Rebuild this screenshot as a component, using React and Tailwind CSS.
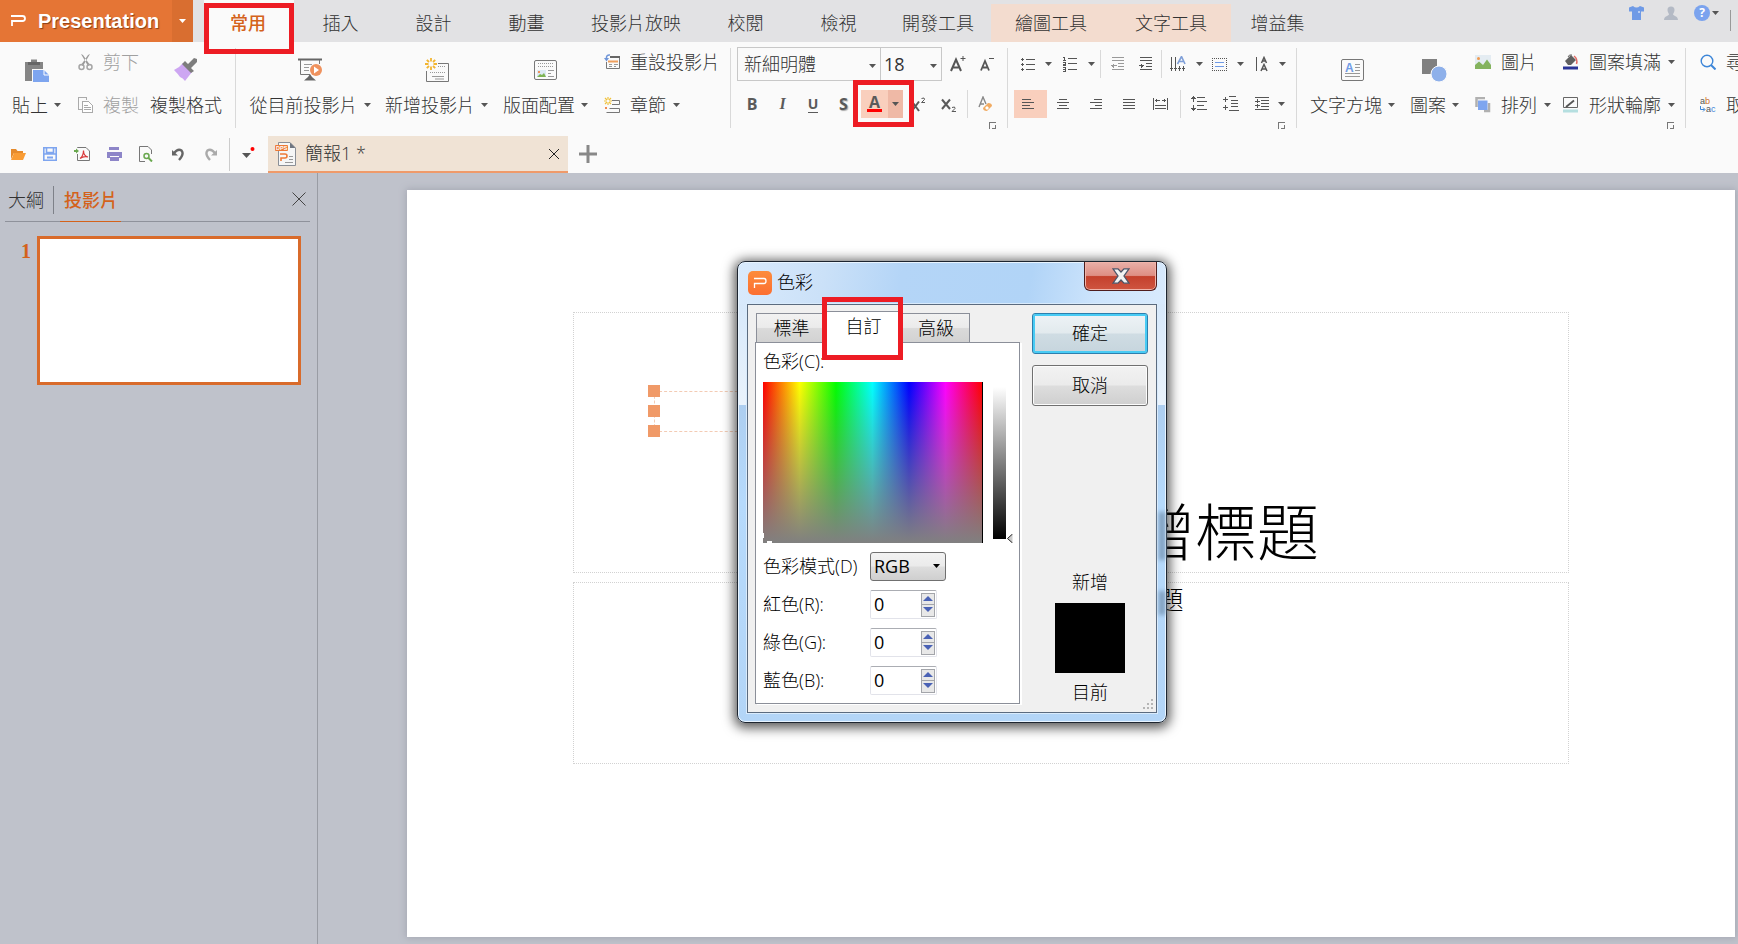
import React, { useState } from "react"
import clsx from "clsx"

const tabs = [
  { label: "插入", width: "w-[93px]" },
  { label: "設計", width: "w-[93px]" },
  { label: "動畫", width: "w-[93px]" },
  { label: "投影片放映", width: "w-[126px]" },
  { label: "校閱", width: "w-[93px]" },
  { label: "檢視", width: "w-[93px]" },
  { label: "開發工具", width: "w-[106px]" },
  { label: "繪圖工具", width: "w-[120px]", context: true },
  { label: "文字工具", width: "w-[120px]", context: true },
  { label: "增益集", width: "w-[93px]" },
]

/* Small building blocks */

function Icon({ w = 16, h = 16, children, className, crisp }) {
  return (
    <svg
      width={w}
      height={h}
      viewBox={`0 0 ${w} ${h}`}
      fill="none"
      stroke="none"
      shapeRendering={crisp ? "crispEdges" : "auto"}
      aria-hidden="true"
      className={clsx("block shrink-0", className)}>
      {children}
    </svg>
  )
}

function Caret({ className, color = "#555" }) {
  return (
    <Icon w={7} h={4} className={className}>
      <path d="M0 0H7L3.500 4z" fill={color} />
    </Icon>
  )
}

function Separator() {
  return <div className="mx-1.5 mt-1.5 h-20 w-px shrink-0 bg-[#d9d9d9]" />
}

function MiniSeparator({ className }) {
  return <div className={clsx("h-7 w-px shrink-0 bg-[#d9d9d9]", className)} />
}

function Highlight({ className }) {
  return (
    <div
      className={clsx(
        "pointer-events-none absolute z-10 border-5 border-[#ed1c24]",
        className
      )}
    />
  )
}

function BigButton({ width, icon, label, caret = true }) {
  return (
    <button
      className={clsx("flex shrink-0 flex-col items-center pt-[15px]", width)}>
      <span className="flex h-[26px] items-center">{icon}</span>
      <span className="mt-[11px] flex h-[22px] items-center gap-1.5 whitespace-nowrap">
        {label}
        {caret && <Caret />}
      </span>
    </button>
  )
}

function SmallButton({ icon, label, caret, disabled }) {
  return (
    <button
      disabled={disabled}
      className="flex h-[22px] items-center whitespace-nowrap disabled:text-[#a0a0a0]">
      <span className="mr-2.5 flex w-4 justify-center">{icon}</span>
      {label}
      {caret && <Caret className="ml-[7px]" />}
    </button>
  )
}

function Stack({ width, children }) {
  return (
    <div
      className={clsx("flex shrink-0 flex-col gap-[21px] pt-[9px] pl-2", width)}>
      {children}
    </div>
  )
}

function Tool({ width, label, children, active }) {
  return (
    <button
      aria-label={label}
      className={clsx(
        "flex h-7 shrink-0 items-center justify-center",
        width,
        active && "bg-[#f9cfbd]"
      )}>
      {children}
    </button>
  )
}

function Launcher({ className }) {
  return (
    <button
      aria-label="更多選項"
      className={clsx("mr-[5px] self-end", className)}>
      <Icon w={7} h={7} crisp>
        <path d="M0.500 7V0.500H7M3 6.500H6.500V3" stroke="#777" />
      </Icon>
    </button>
  )
}

/* Draws horizontal rules, each one given as [x, y, length] */
function Rules({ rows, color = "#555", weight = 1 }) {
  return rows.map(([x, y, len], i) => (
    <rect key={i} x={x} y={y} width={len} height={weight} fill={color} />
  ))
}

/* Title bar */

function TitleBar() {
  return (
    <header className="flex h-[42px] overflow-visible bg-[#e2e2e4]">
      <button className="flex w-[172px] shrink-0 items-center bg-[#e57535] pl-[11px] text-white">
        <Icon w={15} h={14}>
          <path
            d="M0 2H11.5Q14 2 14 4.500T11.500 7H1V12"
            stroke="#fff"
            strokeWidth="1.800"
          />
        </Icon>
        <span className="ml-3 font-['Liberation_Sans',sans-serif] text-xl leading-6 font-bold [text-shadow:1px_1px_1px_#8a4018]">
          Presentation
        </span>
      </button>
      <button
        aria-label="選單"
        className="flex w-[21px] shrink-0 items-center justify-center bg-[#d96e30]">
        <Caret color="#fff" />
      </button>
      <nav className="flex">
        <button className="relative ml-[11px] w-[90px] bg-[#fafafa] pt-1 pr-0.5 font-medium text-[#d4621b]">
          常用
          <Highlight className="top-[3px] left-0 h-[51px] w-[90px]" />
        </button>
        {tabs.map((tab) => (
          <button
            key={tab.label}
            className={clsx(
              "mt-1 h-[38px] shrink-0 whitespace-nowrap",
              tab.width,
              tab.context && "bg-[#f3dccf]"
            )}>
            {tab.label}
          </button>
        ))}
      </nav>
      <div className="ml-auto flex items-start pt-[5px] pr-[7px]">
        <button aria-label="佈景主題" className="mr-5">
          <Icon w={15} h={16}>
            <path
              d="M4 1L0 2.500V6.500H3V15H12V6.500H15V2.500L11 1Q7.500 4 4 1Z"
              fill="#6f9ae6"
            />
            <path d="M9 7h2" stroke="#fff" />
          </Icon>
        </button>
        <button aria-label="帳戶" className="mr-4">
          <Icon w={14} h={16}>
            <path
              d="M7 1.500c2.500 0 3.500 1.500 3.500 3.500S9 8.500 9 9.500c0 1 5 1.500 5 5.500H0c0-4 5-4.500 5-5.500 0-1-1.500-2.500-1.500-4.500S4.500 1.500 7 1.500z"
              fill="#b4bac5"
            />
          </Icon>
        </button>
        <button aria-label="說明" className="mr-[11px] flex items-center gap-0.5">
          <span className="flex h-4 w-4 items-center justify-center rounded-full bg-[#7ba3ee] text-xs leading-4 font-bold text-white">
            ?
          </span>
          <Caret />
        </button>
        <div className="mt-[5px] h-[21px] w-px bg-[#999]" />
      </div>
    </header>
  )
}

/* Ribbon icons */

const pasteIcon = (
  <Icon w={25} h={24}>
    <path d="M1 4H7V1.500H13V4H19V11H8V23H1Z" fill="#858585" />
    <path d="M4 4h12v3H4z" fill="#666" />
    <path d="M9 12H20L25 17V24H9Z" fill="#7ea5ef" />
    <path d="M20 12V17H25" stroke="#fff" />
  </Icon>
)

const cutIcon = (
  <Icon w={15} h={17}>
    <path d="M3 0L5 1 12 11 10 12ZM12 0L10 1 3 11 5 12Z" fill="#9b9b9b" />
    <circle cx="3.5" cy="13" r="2.500" stroke="#a5a5a5" strokeWidth="1.500" />
    <circle cx="11.500" cy="13" r="2.500" stroke="#a5a5a5" strokeWidth="1.500" />
  </Icon>
)

const copyIcon = (
  <Icon w={15} h={16} crisp>
    <path d="M4 12.500H0.500V0.500H8.500V3" stroke="#aaa" />
    <path d="M4.500 4.500H10.500L14.500 8.500V15.500H4.500Z" stroke="#aaa" fill="#fff" />
    <path d="M6 8.500h4M6 10.500h7M6 12.500h7" stroke="#aaa" />
  </Icon>
)

const brushIcon = (
  <Icon w={24} h={24}>
    <path d="M9 5L18 14 11 23Q9 20 6 19 4 16 0 12Q5 10 9 5Z" fill="#cda6f2" />
    <path d="M11 3L14 6 20 0 23 1 23 4 17 10 20 13 17 15 8 6Z" fill="#7d7d7d" />
  </Icon>
)

const playIcon = (
  <Icon w={24} h={24}>
    <path d="M0 1.500H24" stroke="#666" strokeWidth="2" />
    <path d="M2.500 2V16.500H12M21.500 2V6" stroke="#777" />
    <path d="M6 6.500h8M6 9.500h5M6 12.500h5" stroke="#999" />
    <path d="M12 16L14 19 18 22.500H6L10 19Z" fill="#666" />
    <circle cx="18" cy="12" r="6" fill="#ef925e" />
    <path d="M16 8.500L21 12 16 15.500Z" fill="#fff" />
  </Icon>
)

const sparkPath =
  "M6 0V3.500M6 8.500V12M0 6H3.500M8.500 6H12M1.800 1.800L4 4M8 8L10.200 10.200M10.200 1.800L8 4M4 8L1.800 10.200"

const newSlideIcon = (
  <Icon w={24} h={24}>
    <path d="M13 5.500H23.500V23.500H1.500V13" stroke="#777" />
    <path d="M13 8.500h8M5 14.500h16" stroke="#999" strokeDasharray="1 1" />
    <path d="M7 18.500h12M10 21h9" stroke="#999" />
    <path d={sparkPath} stroke="#f2b531" strokeWidth="1.800" />
  </Icon>
)

const layoutIcon = (
  <Icon w={24} h={22}>
    <rect x="0.500" y="1.500" width="22" height="19" rx="1.500" stroke="#777" />
    <path d="M4 4.500h16M4 7.500h16" stroke="#999" strokeDasharray="1 1" />
    <rect x="3" y="11" width="9" height="7" fill="#dce9f3" />
    <path d="M3 18L6 15 8 16 10 14 12 18Z" fill="#7db354" />
    <path d="M4 12h2v2H4z" fill="#ef925e" />
    <path d="M14 11.500h6M14 14.500h3M14 17.500h6" stroke="#999" />
  </Icon>
)

const resetIcon = (
  <Icon w={16} h={16}>
    <path d="M6 2.500H15.500V14.500H2.500V8" stroke="#777" />
    <path d="M6 3H16" stroke="#666" strokeWidth="2" />
    <path d="M4 7.500h10" stroke="#ef9f5c" strokeWidth="2" />
    <path d="M5 10.500h3M5 12.500h3M10 10.500h4M10 12.500h2" stroke="#999" />
    <path d="M6 1Q2 0.500 2.500 5" stroke="#6f95d8" strokeWidth="1.500" />
    <path d="M0 4H5L2.500 7.500Z" fill="#6f95d8" />
  </Icon>
)

const sectionIcon = (
  <Icon w={16} h={17}>
    <path
      d="M4 0V2.500M4 5.500V8M0 4H2.500M5.500 4H8M1 1L3 3M5 5L7 7M7 1L5 3M3 5L1 7"
      stroke="#f0c23c"
      strokeWidth="1.200"
    />
    <path d="M8 3.500H15.500V7.500H8" stroke="#777" />
    <path d="M1 10h2v2H1z" fill="#ef8a50" />
    <path d="M5.500 11.500H15.500V15.500H2.500" stroke="#777" />
  </Icon>
)

const textBoxIcon = (
  <Icon w={24} h={24}>
    <rect x="0.500" y="1.500" width="22" height="21" rx="1.500" stroke="#777" />
    <text
      x="4"
      y="13.500"
      fontSize="12"
      fontWeight="700"
      fill="#6f9ae6"
      fontFamily="Liberation Sans, sans-serif">
      A
    </text>
    <path d="M14 6.500h5M14 9.500h5M14 12.500h5M4 15.500h15M4 18.500h15" stroke="#999" />
  </Icon>
)

const shapeIcon = (
  <Icon w={25} h={24}>
    <path d="M0 1H15V16H0Z" fill="#808080" />
    <circle cx="17" cy="16" r="8" fill="#8eb0ea" stroke="#fafafa" />
  </Icon>
)

const pictureIcon = (
  <Icon w={16} h={16}>
    <path d="M0 1H16V15H0Z" fill="#e4ecf2" />
    <circle cx="3.500" cy="4.500" r="1.500" fill="#f09a50" />
    <path d="M0 15V11L4 7.500 8 11 12 5.500 16 11V15Z" fill="#84b35e" />
  </Icon>
)

const arrangeIcon = (
  <Icon w={16} h={16}>
    <path d="M1.500 10V1H10M9 14H14V6" stroke="#b0b0b0" strokeWidth="2.500" />
    <path d="M3 3.500h9.500v9.500H3z" fill="#7ea5ef" />
  </Icon>
)

const fillIcon = (
  <Icon w={16} h={16}>
    <path d="M2 7L8 1 13 6 8 11H5Z" fill="#606060" />
    <path d="M5 3Q6 0 9 1" stroke="#666" />
    <path d="M11 2Q15 5 13.500 10" stroke="#e26a63" strokeWidth="1.500" />
    <path d="M0 12.500h15v3H0z" fill="#2b3597" />
  </Icon>
)

const outlineIcon = (
  <Icon w={16} h={16}>
    <path d="M0.500 0.500H14.500V10.500H0.500Z" stroke="#666" />
    <path d="M3 10L11 3.500" stroke="#555" strokeWidth="1.800" />
    <path d="M0 12.500h15v3H0z" fill="#b5dfe0" />
  </Icon>
)

const findIcon = (
  <Icon w={16} h={16}>
    <circle cx="7" cy="7" r="5.800" stroke="#3d86d8" strokeWidth="1.400" />
    <path d="M11 11L15.500 15.500" stroke="#3d86d8" strokeWidth="2" />
  </Icon>
)

const replaceIcon = (
  <Icon w={16} h={16}>
    <g fontSize="9" fontWeight="400" fontFamily="Liberation Sans, sans-serif">
      <text x="0" y="7" fill="#555">
        a
      </text>
      <text x="5" y="7" fill="#d0702c">
        b
      </text>
      <text x="6" y="15" fill="#555">
        a
      </text>
      <text x="11" y="15" fill="#3d86d8">
        c
      </text>
    </g>
    <path d="M0.500 9V12.500H4.500M3 10.500L5 12.500 3 14.500" stroke="#3d86d8" />
  </Icon>
)

function FontGroup({ onPickColor }) {
  const [font, setFont] = useState("新細明體")
  const [size, setSize] = useState("18")
  return (
    <div className="flex w-[264px] shrink-0 flex-col pt-[5px]">
      <div className="flex h-[34px] items-center">
        <div className="relative h-full w-36">
          <select
            aria-label="字型"
            value={font}
            onChange={(e) => setFont(e.target.value)}
            className="h-full w-full appearance-none border border-[#c8c8c8] pl-1.5 outline-0">
            <option>新細明體</option>
            <option>標楷體</option>
          </select>
          <Caret className="pointer-events-none absolute top-[17px] right-[5px]" />
        </div>
        <div className="relative -ml-px h-full w-[62px]">
          <select
            aria-label="字型大小"
            value={size}
            onChange={(e) => setSize(e.target.value)}
            className="h-full w-full appearance-none border border-[#c8c8c8] pl-[3px] font-normal outline-0">
            <option>18</option>
            <option>24</option>
          </select>
          <Caret className="pointer-events-none absolute top-[17px] right-[5px]" />
        </div>
        <Tool width="w-[31px]" label="放大字型">
          <Icon w={16} h={18}>
            <path d="M1 16L6 4.500 11 16M3 12.500H9" stroke="#555" strokeWidth="2" />
            <path d="M10.500 3.500H15.500M13 1V6" stroke="#555" />
          </Icon>
        </Tool>
        <Tool width="w-[28px]" label="縮小字型">
          <Icon w={15} h={18}>
            <path d="M1 15.500L5 6 9 15.500M3 12.500H7" stroke="#555" strokeWidth="1.800" />
            <path d="M9 3.500H14" stroke="#555" />
          </Icon>
        </Tool>
      </div>
      <div className="mt-[9px] flex font-['Open_Sans',sans-serif] text-base leading-5 font-bold text-[#5a5a5a]">
        <Tool width="w-[30px]" label="粗體">
          B
        </Tool>
        <Tool width="w-[31px]" label="斜體">
          <span className="font-['Liberation_Serif',serif] italic">I</span>
        </Tool>
        <Tool width="w-[30px]" label="底線">
          <span className="border-b border-[#5a5a5a] text-sm leading-4">U</span>
        </Tool>
        <Tool width="w-[31px]" label="陰影">
          <span className="[text-shadow:1px_1px_1px_#aaa]">S</span>
        </Tool>
        <div className="relative ml-0.5 flex">
          <button
            aria-label="字型色彩"
            className="flex h-7 w-[27px] flex-col items-center bg-[#f9cfbd] pt-1">
            <span className="text-base leading-4">A</span>
            <span className="-mt-px h-[3px] w-[15px] bg-[#f00]" />
          </button>
          <button
            aria-label="字型色彩選項"
            onClick={onPickColor}
            className="flex h-7 w-[15px] items-center justify-center bg-[#efb9a6]">
            <Caret />
          </button>
          <Highlight className="-top-2.5 -left-2 h-[47px] w-[61px]" />
        </div>
        <Tool width="w-[30px]" label="上標">
          <Icon w={15} h={15}>
            <path d="M1 4.500L8 14M8 4.500L1 14" stroke="#5a5a5a" strokeWidth="2" />
            <path d="M10.500 1.500Q14 0 13.500 2.500L10.500 5.500H14" stroke="#5a5a5a" />
          </Icon>
        </Tool>
        <Tool width="w-[30px]" label="下標">
          <Icon w={15} h={15}>
            <path d="M1 2.500L9 12M9 2.500L1 12" stroke="#5a5a5a" strokeWidth="2" />
            <path d="M11 10.500Q14.500 9 14 11.500L11 14.500H15" stroke="#5a5a5a" />
          </Icon>
        </Tool>
        <MiniSeparator className="ml-1" />
        <Tool width="w-[35px]" label="清除格式">
          <Icon w={15} h={16}>
            <path d="M1 11L5 1 8 8M2.500 8H6" stroke="#888" strokeWidth="1.400" />
            <path d="M5 12L10 7Q14 7 14 10L9 15Q5 15 5 12Z" fill="#f1ab62" />
            <path d="M7 12L9 10 11 12 9 14Z" fill="#fff" />
          </Icon>
        </Tool>
      </div>
      <Launcher className="mt-1" />
    </div>
  )
}

function ParagraphGroup() {
  return (
    <div className="flex w-[276px] shrink-0 flex-col pt-2">
      <div className="flex items-center">
        <Tool width="w-[28px]" label="項目符號">
          <Icon w={14} h={14} crisp>
            <Rules rows={[[5, 2, 9], [5, 7, 9], [5, 12, 9], [0, 2, 3], [0, 7, 3], [0, 12, 3]]} />
            <path d="M1.500 1v3M1.500 6v3M1.500 11v3" stroke="#555" />
          </Icon>
        </Tool>
        <Tool width="w-[13px]" label="項目符號選項">
          <Caret />
        </Tool>
        <Tool width="w-[30px]" label="編號">
          <Icon w={14} h={16} crisp>
            <Rules rows={[[5, 2, 9], [5, 7, 9], [5, 13, 9]]} />
            <path
              d="M0 1.500h1.500v3M0 4.500h3M0 6.500h2.500v1.500h-2v1.500h2.500M0 11.500h2.500v4H0M0 13.500h2.500"
              stroke="#555"
            />
          </Icon>
        </Tool>
        <Tool width="w-[12px]" label="編號選項">
          <Caret />
        </Tool>
        <MiniSeparator className="ml-[3px]" />
        <Tool width="w-[32px]" label="減少縮排">
          <Icon w={13} h={14} crisp>
            <Rules color="#999" rows={[[1, 0, 12], [1, 3, 12], [7, 6, 6], [7, 9, 6], [1, 12, 12]]} />
            <path d="M0 8.500H6M2.500 6.500V10.500M1.500 7.500V9.500" stroke="#999" />
          </Icon>
        </Tool>
        <Tool width="w-[24px]" label="增加縮排">
          <Icon w={13} h={14} crisp>
            <Rules rows={[[1, 0, 12], [1, 3, 12], [7, 6, 6], [7, 9, 6], [1, 12, 12]]} />
            <path d="M0 8.500H5M2.500 6.500V10.500M3.500 7.500V9.500" stroke="#555" />
          </Icon>
        </Tool>
        <MiniSeparator className="ml-1" />
        <Tool width="w-[32px]" label="文字方向">
          <Icon w={16} h={16}>
            <path d="M1.500 1V15M5.500 1V15M9.500 10V15M13.500 10V15" stroke="#555" />
            <path d="M0 12.500h15" stroke="#555" strokeDasharray="3 1" />
            <path d="M7.500 8L11.500 0.500 15 8M9 5.500H14" stroke="#7f9fd8" strokeWidth="1.600" />
          </Icon>
        </Tool>
        <Tool width="w-[10px]" label="文字方向選項">
          <Caret />
        </Tool>
        <Tool width="w-[30px]" label="對齊文字">
          <Icon w={15} h={13} crisp>
            <path
              d="M0 0.500H15M0 12.500H15M0.500 0V13M14.500 0V13"
              stroke="#555"
              strokeDasharray="1 1"
            />
            <Rules color="#6f9ae6" rows={[[3, 4, 9], [3, 8, 9]]} />
          </Icon>
        </Tool>
        <Tool width="w-[13px]" label="對齊文字選項">
          <Caret />
        </Tool>
        <Tool width="w-[30px]" label="字元間距">
          <Icon w={13} h={16}>
            <path d="M0.500 1V15" stroke="#555" />
            <path d="M5.500 7L8 1.500 10.500 7M6.500 5H9.500M5 15L8 8.500 11 15M6 13H10" stroke="#555" strokeWidth="1.500" />
          </Icon>
        </Tool>
        <Tool width="w-[11px]" label="字元間距選項">
          <Caret />
        </Tool>
      </div>
      <div className="mt-3 flex items-center">
        <Tool width="w-[33px]" label="靠左對齊" active>
          <Icon w={14} h={10} crisp className="-ml-1">
            <Rules rows={[[0, 0, 9], [0, 3, 12], [0, 6, 8], [0, 9, 12]]} />
          </Icon>
        </Tool>
        <Tool width="w-[32px]" label="置中">
          <Icon w={12} h={10} crisp>
            <Rules rows={[[2, 0, 8], [0, 3, 12], [2, 6, 8], [0, 9, 12]]} />
          </Icon>
        </Tool>
        <Tool width="w-[34px]" label="靠右對齊">
          <Icon w={12} h={10} crisp>
            <Rules rows={[[4, 0, 8], [0, 3, 12], [5, 6, 7], [0, 9, 12]]} />
          </Icon>
        </Tool>
        <Tool width="w-[31px]" label="左右對齊">
          <Icon w={12} h={10} crisp>
            <Rules rows={[[0, 0, 12], [0, 3, 12], [0, 6, 12], [0, 9, 12]]} />
          </Icon>
        </Tool>
        <Tool width="w-[33px]" label="分散對齊">
          <Icon w={15} h={12} crisp>
            <path d="M0.500 0V12M14.500 0V12M2 2.500H6.500M8.500 2.500H13M3.500 1V4M11.500 1V4" stroke="#555" />
            <Rules rows={[[2, 7, 11], [2, 10, 11]]} />
          </Icon>
        </Tool>
        <MiniSeparator className="ml-[3px]" />
        <Tool width="w-[36px]" label="行距">
          <Icon w={16} h={16} crisp>
            <Rules rows={[[6, 1, 8], [6, 5, 10], [6, 9, 7], [6, 13, 10]]} />
            <path d="M2.500 0V6M0 2.500H5M1 1.500H4M2.500 9V15M0 12.500H5M1 13.500H4" stroke="#555" />
          </Icon>
        </Tool>
        <Tool width="w-[28px]" label="段落間距">
          <Icon w={16} h={16} crisp>
            <Rules rows={[[6, 0, 7], [8, 4, 7], [8, 7, 7], [8, 10, 7], [6, 14, 10]]} />
            <path d="M2.500 1V6M0 3.500H5M2.500 9V14M0 11.500H5" stroke="#555" />
          </Icon>
        </Tool>
        <Tool width="w-[33px]" label="行高">
          <Icon w={14} h={14} crisp>
            <Rules rows={[[0, 0, 14], [6, 3, 8], [6, 6, 8], [6, 9, 8], [0, 12, 14]]} />
            <path d="M2.500 2V6M0 4.500H5M2.500 7V11M0 8.500H5" stroke="#555" />
          </Icon>
        </Tool>
        <Caret />
      </div>
      <Launcher className="mt-1" />
    </div>
  )
}

function Ribbon({ onPickColor }) {
  return (
    <div className="flex h-[94px] bg-[#fafafa]">
      <BigButton width="w-[69px] pl-1" icon={pasteIcon} label="貼上" />
      <Stack width="w-[76px]">
        <SmallButton icon={cutIcon} label="剪下" disabled />
        <SmallButton icon={copyIcon} label="複製" disabled />
      </Stack>
      <BigButton width="w-[82px]" icon={brushIcon} label="複製格式" caret={false} />
      <div className="w-0.5 shrink-0" />
      <Separator />
      <BigButton width="w-[136px]" icon={playIcon} label="從目前投影片" />
      <BigButton width="w-[117px]" icon={newSlideIcon} label="新增投影片" />
      <BigButton width="w-[101px]" icon={layoutIcon} label="版面配置" />
      <Stack width="w-[128px]">
        <SmallButton icon={resetIcon} label="重設投影片" />
        <SmallButton icon={sectionIcon} label="章節" caret />
      </Stack>
      <Separator />
      <FontGroup onPickColor={onPickColor} />
      <Separator />
      <ParagraphGroup />
      <Separator />
      <BigButton width="w-[99px]" icon={textBoxIcon} label="文字方塊" />
      <BigButton width="w-[65px]" icon={shapeIcon} label="圖案" />
      <Stack width="w-[88px]">
        <SmallButton icon={pictureIcon} label="圖片" />
        <SmallButton icon={arrangeIcon} label="排列" caret />
      </Stack>
      <div className="flex w-[124px] shrink-0 flex-col">
        <Stack>
          <SmallButton icon={fillIcon} label="圖案填滿" caret />
          <SmallButton icon={outlineIcon} label="形狀輪廓" caret />
        </Stack>
        <Launcher className="mt-1.5" />
      </div>
      <Separator />
      <div className="min-w-0 flex-1 overflow-hidden">
        <Stack>
          <SmallButton icon={findIcon} label="尋找" />
          <SmallButton icon={replaceIcon} label="取代" />
        </Stack>
      </div>
    </div>
  )
}

/* Quick access + document tabs */

const quickActions = [
  {
    label: "開啟",
    icon: (
      <Icon>
        <path d="M1 13V3H6L7.500 5H13V7H4Z" fill="#e58a2b" />
        <path d="M4 7H16L13 14H1Z" fill="#f99c34" />
      </Icon>
    ),
  },
  {
    label: "儲存",
    icon: (
      <Icon w={14} h={14}>
        <path d="M0.800 0.800H13.200V13.200H0.800Z" stroke="#7ea5ef" strokeWidth="1.600" />
        <path d="M0 7H14M3.500 1V5.500H10.500V1" stroke="#7ea5ef" strokeWidth="1.600" />
        <path d="M4 10.500h6" stroke="#7ea5ef" strokeWidth="2" />
      </Icon>
    ),
  },
  {
    label: "匯出 PDF",
    icon: (
      <Icon>
        <path d="M3.500 2V1.500H12L15.500 5V14.500H3.500V8" stroke="#777" />
        <path d="M0 4h2V2.500L5 5 2 7.500V6H0z" fill="#6aa84f" />
        <path d="M6 12.500C8 11 9.500 8 9.500 4.500 9.500 8 11.500 10.500 14 11 11 10 8 11 6 12.500Z" stroke="#d8383a" strokeWidth="1.200" />
      </Icon>
    ),
  },
  {
    label: "列印",
    icon: (
      <Icon>
        <path d="M3 1H13V4H3Z" fill="#8d85c8" />
        <path d="M1 6H16V12H13V10H4V12H1Z" fill="#8d85c8" />
        <path d="M4 11H13V15H4Z" fill="#8d85c8" />
      </Icon>
    ),
  },
  {
    label: "預覽列印",
    icon: (
      <Icon>
        <path d="M7 15.500H1.500V0.500H10L13.500 4V8" stroke="#777" />
        <circle cx="8.500" cy="10" r="2.500" stroke="#6aa84f" strokeWidth="1.500" />
        <path d="M10.500 12L14 15.500" stroke="#6aa84f" strokeWidth="2" />
      </Icon>
    ),
  },
  {
    label: "復原",
    icon: (
      <Icon w={13} h={14}>
        <path d="M2 6Q6 1 9.500 3.500 12.500 7 7 13" stroke="#666" strokeWidth="2.400" />
        <path d="M0 3V8.500H6Z" fill="#666" />
      </Icon>
    ),
  },
  {
    label: "取消復原",
    icon: (
      <Icon w={13} h={14}>
        <path d="M11 6Q7 1 3.500 3.500 0.500 7 6 13" stroke="#aaa" strokeWidth="2.400" />
        <path d="M13 3V8.500H7Z" fill="#aaa" />
      </Icon>
    ),
  },
]

function DocumentBar() {
  return (
    <div className="flex h-[37px] bg-[#fafafa]">
      <div className="flex items-center pb-0.5 pl-0.5">
        {quickActions.map((action) => (
          <button
            key={action.label}
            aria-label={action.label}
            className="flex h-8 w-8 items-center justify-center">
            {action.icon}
          </button>
        ))}
      </div>
      <div className="mt-0.5 ml-[3px] h-[33px] w-px bg-[#ccc]" />
      <button
        aria-label="自訂快速存取"
        className="flex w-[38px] items-center justify-center pb-1.5">
        <Icon w={14} h={12}>
          <path d="M0 7H9L4.500 12Z" fill="#555" />
          <circle cx="10.500" cy="3" r="2" fill="#f00" />
        </Icon>
      </button>
      <div className="flex w-[300px] items-center border-b-2 border-[#ef9a6a] bg-[#f0e3d5] pr-[9px] pl-[7px]">
        <Icon w={22} h={24}>
          <path d="M3.500 0.500H15L20.500 6V23.500H3.500Z" fill="#f6f6f6" stroke="#8b8f96" />
          <path d="M15 0.500V6H20.500Z" fill="#707680" />
          <rect y="3" width="13" height="6" rx="1" fill="#ee7a36" />
          <text
            x="1"
            y="8"
            fontSize="5.500"
            fontWeight="700"
            fill="#fff"
            fontFamily="Liberation Sans, sans-serif">
            DPS
          </text>
          <path d="M5 12H10Q12 12 12 14T10 16H6V19" stroke="#ee7a36" strokeWidth="1.600" />
          <path d="M14 14.500h4M14 17.500h4M10 20.500h8" stroke="#999" />
        </Icon>
        <span className="ml-2 flex-1 pb-px">簡報1 *</span>
        <button aria-label="關閉文件">
          <Icon w={10} h={10}>
            <path d="M0 0L10 10M10 0L0 10" stroke="#222" />
          </Icon>
        </button>
      </div>
      <button aria-label="新增文件" className="ml-[11px] pb-px">
        <Icon w={18} h={18}>
          <path d="M0 9H18M9 0V18" stroke="#888" strokeWidth="3" />
        </Icon>
      </button>
    </div>
  )
}

function SlidePanel() {
  return (
    <aside className="w-[318px] shrink-0 border-r border-[#999ca4]">
      <div className="mr-[7px] ml-[5px] flex h-[49px] items-center border-b border-[#8f929b] pt-[5px]">
        <button className="pr-[5px] pl-[3px] whitespace-nowrap">大綱</button>
        <div className="ml-1 h-7 w-px bg-[#7e8189]" />
        <button className="-mb-px ml-1.5 h-[44px] border-b border-[#d4621b] pr-[3px] pl-1 font-medium whitespace-nowrap text-[#d4621b]">
          投影片
        </button>
        <button aria-label="關閉窗格" className="mr-1 mb-[5px] ml-auto pt-1">
          <Icon w={14} h={14}>
            <path d="M0.500 0.500L13.500 13.500M13.500 0.500L0.500 13.500" stroke="#444" />
          </Icon>
        </button>
      </div>
      <div className="mt-3.5 flex pl-[21px]">
        <span className="w-4 pt-[3px] font-['Liberation_Serif',serif] text-xl leading-6 font-bold text-[#d4621b]">
          1
        </span>
        <button
          aria-label="投影片 1"
          className="h-[149px] w-[264px] border-3 border-[#d96b2b] bg-white"
        />
      </div>
    </aside>
  )
}

function SlideCanvas() {
  return (
    <main className="flex min-w-0 flex-1 pt-[17px] pr-[3px] pb-[7px] pl-[89px]">
      <div className="relative flex flex-1 flex-col gap-[9px] bg-white px-[166px] pt-[122px] text-black shadow-[0_0_7px_1px_#a4a7b2]">
        <div className="flex h-[261px] items-end justify-center border border-dotted border-[#d2d2d2]">
          <h1 className="text-[62px] leading-[80px] whitespace-nowrap">
            按一下以新增標題
          </h1>
        </div>
        <div className="flex h-[182px] justify-center border border-dotted border-[#d2d2d2]">
          <p className="text-[25px] leading-[32px] whitespace-nowrap">
            按一下以新增副標題
          </p>
        </div>
        {/* selected text box */}
        <div className="absolute top-[201px] left-[247px] h-[41px] w-[200px] border border-dashed border-[#f3cbb4]">
          <div className="-mt-[7px] -ml-[7px] flex flex-col gap-2">
            <div className="h-3 w-3 bg-[#f09a68]" />
            <div className="h-3 w-3 bg-[#f09a68]" />
            <div className="h-3 w-3 bg-[#f09a68]" />
          </div>
        </div>
      </div>
    </main>
  )
}

/* Color dialog */

function ChannelRow({ id, label, value, onChange }) {
  const step = (n) => onChange(Math.min(255, Math.max(0, Number(value) + n)))
  return (
    <div className="flex h-[29px] items-center">
      <label htmlFor={id} className="w-[107px] pb-0.5">
        {label}
      </label>
      <div className="flex h-[29px] w-[67px] items-center rounded-xs border border-[#e2e3ea] border-t-[#abadb3] bg-white pr-px">
        <input
          id={id}
          type="text"
          value={value}
          onChange={(e) => onChange(e.target.value)}
          className="w-[50px] pb-0.5 pl-[3px] font-normal outline-0"
        />
        <div className="flex h-6 w-3.5 flex-col border border-[#a3a5aa] bg-[#e8e8e8]">
          <button
            aria-label={`${label} +`}
            onClick={() => step(1)}
            className="flex flex-1 items-start justify-center border-b border-[#a3a5aa] pt-0.5">
            <Icon w={10} h={5}>
              <path d="M5 0L10 5H0Z" fill="#4a62b5" />
            </Icon>
          </button>
          <button
            aria-label={`${label} -`}
            onClick={() => step(-1)}
            className="flex flex-1 items-start justify-center pt-0.5">
            <Icon w={10} h={5}>
              <path d="M0 0H10L5 5Z" fill="#4a62b5" />
            </Icon>
          </button>
        </div>
      </div>
    </div>
  )
}

function ColorDialog({ onClose }) {
  const [rgb, setRgb] = useState({ r: 0, g: 0, b: 0 })
  const [mode, setMode] = useState("RGB")
  const setChannel = (key) => (value) => setRgb({ ...rgb, [key]: value })

  return (
    <div
      role="dialog"
      aria-label="色彩"
      className="absolute top-[261px] left-[737px] w-[430px] rounded-lg border border-[#1d2530] bg-[linear-gradient(to_bottom,#cfe4fa_0,#eaf3fc_143px,#adcef0_143px,#b6dafc_240px,#b3d5f7_100%)] px-[9px] pb-[9px] text-black shadow-[0_2px_12px_3px_rgba(0,0,0,0.65),inset_0_0_0_1px_#e8f4ff]">
      <div className="-mx-2 mt-px flex h-[41px] rounded-t-md bg-[linear-gradient(100deg,#d9eafc_0%,#cbe1f8_20%,#b4d5f7_38%,#b1d4f7_68%,#cde4fc_84%,#d8eafd_100%)] pl-[9px]">
        <div className="mt-2 flex h-6 w-6 items-center justify-center rounded-[5px] bg-[linear-gradient(#fd8c3c,#fc6f31)]">
          <Icon w={14} h={12}>
            <path d="M1 1.500H11Q13 1.500 13 4T11 6.500H1.500V11" stroke="#fff" strokeWidth="1.300" />
          </Icon>
        </div>
        <h2 className="mt-1.5 ml-[5px] leading-[26px]">色彩</h2>
        <button
          aria-label="關閉"
          onClick={onClose}
          className="-mt-px mr-2 ml-auto flex h-[29px] w-[73px] items-center justify-center rounded-b-md border border-t-0 border-[#4f1d1d] bg-[linear-gradient(#eab0a8_0,#de8e84_48%,#c4402d_52%,#cf5540_100%)] shadow-[inset_0_0_0_1px_#f0b4aa]">
          <Icon w={18} h={16}>
            <path
              d="M1 0.800H6L9 4 12 0.800H17L12 8 17 15.200H12L9 12 6 15.200H1L6 8Z"
              fill="#f2f2f2"
              stroke="#4c5468"
              strokeWidth="1.300"
            />
          </Icon>
        </button>
      </div>
      <div className="flex border border-[#5b6b7f] bg-[#f0f0f0] pr-2 pl-[7px] outline outline-[#d9ebfc]">
        <div className="w-[265px] pt-2 pb-2">
          <div role="tablist" className="ml-px flex h-[29px]">
            <button
              role="tab"
              aria-selected="false"
              className="w-[69px] border border-b-0 border-[#8b8f99] bg-[linear-gradient(#f2f2f2_0,#ebebeb_48%,#dadada_52%,#d2d2d2_100%)] pl-0.5">
              標準
            </button>
            <div className="relative -mt-0.5 flex w-[75px]">
              <button
                role="tab"
                aria-selected="true"
                className="z-[1] -mb-px h-8 w-full border-t border-[#8b8f99] bg-white pb-[3px] pl-0.5">
                自訂
              </button>
              <Highlight className="-top-3.5 -left-[3px] h-[63px] w-[81px]" />
            </div>
            <button
              role="tab"
              aria-selected="false"
              className="w-[70px] border border-b-0 border-[#8b8f99] bg-[linear-gradient(#f2f2f2_0,#ebebeb_48%,#dadada_52%,#d2d2d2_100%)] pl-0.5">
              高級
            </button>
          </div>
          <div className="border border-[#8b8f99] bg-white pb-2 pl-[7px] shadow-[2px_1px_0_#fff]">
            <div className="flex h-[39px] items-center pb-[3px]">色彩(C):</div>
            <div className="flex">
              <div className="h-[161px] w-[220px] border-r border-black bg-[linear-gradient(to_bottom,transparent,#808080),linear-gradient(to_right,#f00,#ff0,#0f0,#0ff,#00f,#f0f,#f00)]">
                <div className="flex h-full flex-col justify-end">
                  <div className="h-[5px] w-px bg-white" />
                  <div className="mt-[3px] ml-1 h-0.5 w-[5px] bg-white" />
                </div>
              </div>
              <div className="mt-[5px] ml-2.5 h-[152px] w-[13px] bg-[linear-gradient(to_bottom,#fff,#000)]" />
              <Icon w={6} h={9} className="mt-[152px] ml-px">
                <path d="M0.500 4.500L5.500 0V9Z" fill="#ccc" />
                <path d="M5.500 0L0.500 4.500 5.500 9" stroke="#222" />
              </Icon>
            </div>
            <div className="mt-[9px] flex items-center">
              <label
                htmlFor="color-mode"
                className="w-[107px] pb-0.5 whitespace-nowrap">
                色彩模式(D)
              </label>
              <div className="relative h-[29px] w-[76px]">
                <select
                  id="color-mode"
                  value={mode}
                  onChange={(e) => setMode(e.target.value)}
                  className="h-full w-full appearance-none rounded-[3px] border border-[#707070] bg-[linear-gradient(#f2f2f2_0,#ebebeb_48%,#dddddd_52%,#cfcfcf_100%)] pb-0.5 pl-[3px] font-normal outline-0">
                  <option>RGB</option>
                  <option>HSL</option>
                </select>
                <Caret
                  color="#000"
                  className="pointer-events-none absolute top-3 right-1.5"
                />
              </div>
            </div>
            <div className="mt-[9px] flex flex-col gap-[9px]">
              <ChannelRow id="channel-r" label="紅色(R):" value={rgb.r} onChange={setChannel("r")} />
              <ChannelRow id="channel-g" label="綠色(G):" value={rgb.g} onChange={setChannel("g")} />
              <ChannelRow id="channel-b" label="藍色(B):" value={rgb.b} onChange={setChannel("b")} />
            </div>
          </div>
        </div>
        <div className="ml-3 flex flex-1 flex-col items-center pt-2">
          <button
            onClick={onClose}
            className="h-[41px] w-full rounded-[3px] border border-[#2c7fae] bg-[linear-gradient(#eef3f6_0,#e2eaee_48%,#cfdce3_52%,#c6d5dd_100%)] pb-0.5 shadow-[inset_0_0_0_2px_#48cbf4]">
            確定
          </button>
          <button
            onClick={onClose}
            className="mt-[11px] h-[41px] w-full rounded-[3px] border border-[#707070] bg-[linear-gradient(#f2f2f2_0,#ebebeb_48%,#dddddd_52%,#cfcfcf_100%)] pb-0.5 shadow-[inset_0_0_0_1px_#fcfcfc]">
            取消
          </button>
          <span className="mt-[163px] leading-[26px]">新增</span>
          <div
            className="mt-2 h-[70px] w-[70px]"
            style={{ backgroundColor: `rgb(${rgb.r}, ${rgb.g}, ${rgb.b})` }}
          />
          <span className="mt-1.5 leading-[26px]">目前</span>
        </div>
        <Icon w={11} h={11} crisp className="-mr-1.5 mb-0.5 -ml-[5px] self-end">
          <path d="M8 0h2v2H8zM4 4h2v2H4zM8 4h2v2H8zM0 8h2v2H0zM4 8h2v2H4zM8 8h2v2H8z" fill="#b5b5b5" />
        </Icon>
      </div>
      {/* slide text showing through the glass edge */}
      <div className="absolute top-[250px] right-px h-12 w-1.5 bg-[#7e9dbc] blur-[2px]" />
      <div className="absolute top-[329px] right-px h-6 w-1.5 bg-[#7e9dbc] blur-[2px]" />
    </div>
  )
}

export default function App() {
  const [dialogOpen, setDialogOpen] = useState(true)

  return (
    <div className="relative flex min-h-screen flex-col overflow-hidden bg-[#bfc2cb] font-['Open_Sans','Noto_Sans_CJK_TC',sans-serif] text-lg leading-[22px] font-light text-[#333]">
      <TitleBar />
      <Ribbon onPickColor={() => setDialogOpen(true)} />
      <DocumentBar />
      <div className="flex flex-1">
        <SlidePanel />
        <SlideCanvas />
      </div>
      {dialogOpen && <ColorDialog onClose={() => setDialogOpen(false)} />}
    </div>
  )
}
